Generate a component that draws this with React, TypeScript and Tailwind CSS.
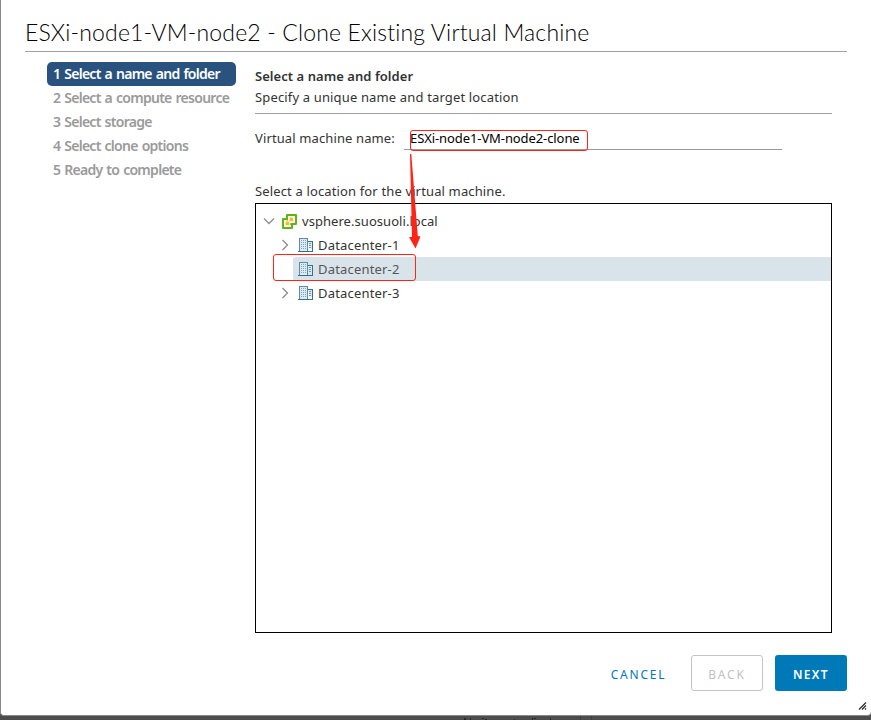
import React from "react";

const steps = [
  "1 Select a name and folder",
  "2 Select a compute resource",
  "3 Select storage",
  "4 Select clone options",
  "5 Ready to complete",
];

function DatacenterIcon() {
  return (
    <svg width="16" height="16" viewBox="0 0 16 16" className="ml-px shrink-0" shapeRendering="crispEdges">
      <path d="M1.5 14V1.5H9.5V14" fill="#dcebf2" stroke="#5f8ba1" />
      <path d="M9.5 4.5H14.5V14" fill="#dcebf2" stroke="#366f8b" />
      <path d="M3.5 3V12M5.5 3V12M7.5 3V12" stroke="#7ea6b8" strokeDasharray="1 1" />
      <path d="M12 6V12" stroke="#7398aa" strokeWidth="2" strokeDasharray="1 1" />
      <path d="M0 14.5H15" stroke="#366f8b" />
    </svg>
  );
}

function VCenterIcon() {
  return (
    <svg width="16" height="16" viewBox="0 0 16 16" className="shrink-0">
      <path d="M6 2H15V11H11V15H2V6H6Z" fill="#fff" stroke="#60b515" strokeWidth="2" strokeLinejoin="round" />
      <path d="M6 5V7.5M8.8 11H11" fill="none" stroke="#60b515" strokeWidth="1.6" />
      <path d="M8.6 4.6H12.2V8.2H8.6ZM4.6 8.6H8.2V12.2H4.6Z" fill="#fdb927" />
    </svg>
  );
}

function Chevron({ open = false }: { open?: boolean }) {
  return (
    <svg width="12" height="12" viewBox="0 0 12 12" className="shrink-0" fill="none" stroke="#8c8c8c" strokeWidth="1.3">
      <path d={open ? "M1 3.5L6 8.5L11 3.5" : "M3.5 1L8.5 6L3.5 11"} />
    </svg>
  );
}

export default function App() {
  return (
    <div className="relative h-[720px] w-[871px] overflow-hidden bg-[#4d4d4d] font-['Noto_Sans',sans-serif] text-[13px] text-[#333]">
      <div className="flex h-[716px] flex-col rounded-b-[4px] border-b border-l border-[#898989] bg-white whitespace-nowrap">
        <header className="ml-6 flex h-[52px] w-[822px] items-end border-b border-[#a0a0a0] font-['Lato',sans-serif] text-[23px] leading-[38px] font-light text-black">
          <span className="tracking-[0.16px]">ESXi-node1-VM-node2 - Clone Existing Virtual Machine</span>
        </header>
        <div className="flex">
          <nav className="ml-[46px] w-[189px] pt-[10px] text-[14px] font-semibold text-[#9a9a9a]">
            {steps.map((label, i) => (
              <div key={label} className={"flex h-6 items-center rounded-[5px] pb-px pl-[6px] " + (i === 0 ? "bg-[#29537e] text-white" : "")}>
                <span className="tracking-[-0.72px] [word-spacing:1px]">{label}</span>
              </div>
            ))}
          </nav>
          <main className="ml-[19px] w-[577px]">
            <div className="flex h-[62px] flex-col border-b border-[#a0a0a0] pt-[14px]">
              <div className="flex h-[21px] items-center font-semibold"><span className="tracking-[0.05px]">Select a name and folder</span></div>
              <div className="flex h-[21px] items-center"><span className="tracking-[0.15px]">Specify a unique name and target location</span></div>
            </div>
            <div className="flex h-9 items-end">
              <div className="flex h-[21px] w-[149px]"><span className="tracking-[0.12px]">Virtual machine name:</span></div>
              <div className="relative h-[21px] w-[378px] border-b border-[#999] pl-[6px] text-black">
                <span className="tracking-[-0.09px]">ESXi-node1-VM-node2-clone</span>
                <div className="absolute top-[1px] left-[6px] h-[21px] w-[178px] rounded-[3px] border border-[#ff2318]" />
              </div>
            </div>
            <div className="mt-[31px] flex h-[22px] items-center"><span className="tracking-[0.14px]">Select a location for the virtual machine.</span></div>
            <div className="h-[430px] border border-black pt-[5px]">
              <div className="flex h-6 items-center pl-[7px]">
                <Chevron open /><span className="w-[6px]" /><VCenterIcon /><span className="ml-[5px] pt-[2px] tracking-[0.05px]">vsphere.suosuoli.local</span>
              </div>
              <div className="flex h-6 items-center pl-[23px]">
                <Chevron /><span className="w-[6px]" /><DatacenterIcon /><span className="ml-1 pt-[2px] tracking-[0.18px]">Datacenter-1</span>
              </div>
              <div className="ml-[37px] flex h-6 items-center rounded-l-[3px] bg-[#d9e4ea] pl-1 text-[#565656]">
                <DatacenterIcon /><span className="ml-1 pt-[2px] tracking-[0.18px]">Datacenter-2</span>
              </div>
              <div className="flex h-6 items-center pl-[23px]">
                <Chevron /><span className="w-[6px]" /><DatacenterIcon /><span className="ml-1 pt-[2px] tracking-[0.18px]">Datacenter-3</span>
              </div>
            </div>
          </main>
        </div>
        <footer className="mt-[22px] mr-6 flex h-9 items-stretch justify-end gap-3 text-[12px]">
          <button className="w-[82px] pt-1 pl-px text-[#0079b8]"><span className="tracking-[1.8px]">CANCEL</span></button>
          <button className="w-[72px] rounded-[3px] border border-[#c4c4c4] pt-1 text-[#c1c1c1]"><span className="tracking-[1.8px]">BACK</span></button>
          <button className="w-[72px] rounded-[3px] bg-[#0079b8] pt-1 font-semibold text-white"><span className="tracking-[1.3px]">NEXT</span></button>
        </footer>
      </div>
      <div className="absolute top-[254px] left-[273px] h-[27px] w-[143px] rounded-[3px] border border-[#ff2318]" />
      <svg className="absolute top-[150px] left-[400px]" width="30" height="102" viewBox="0 0 30 102">
        <path d="M10 4H11.3L17.8 86L20.5 86.5L15.5 98.5L9 87H12Z" fill="#ff2318" />
      </svg>
      <svg className="absolute top-[702px] left-[858px]" width="10" height="9" viewBox="0 0 10 9">
        <path d="M1 7.5L8 .5M4 7.5L8 3.5M7 7.5L8 6.5" stroke="#333" strokeWidth="1.4" />
      </svg>
      <svg className="absolute top-[716px] left-[460px]" width="140" height="4" viewBox="0 0 140 4" shapeRendering="crispEdges">
        <path d="M4 2h2v2h-2zM10 2h1v2h-1zM22 2h2v1h-2zM25 3h2v1h-2zM54 3h1v1h-1zM72 2h1v2h-1zM74 2h2v1h-2zM90 2h1v2h-1z" fill="#292929" />
        <path d="M120 0h1v4h-1zM131 0h1v4h-1z" fill="#404040" />
      </svg>
    </div>
  );
}
